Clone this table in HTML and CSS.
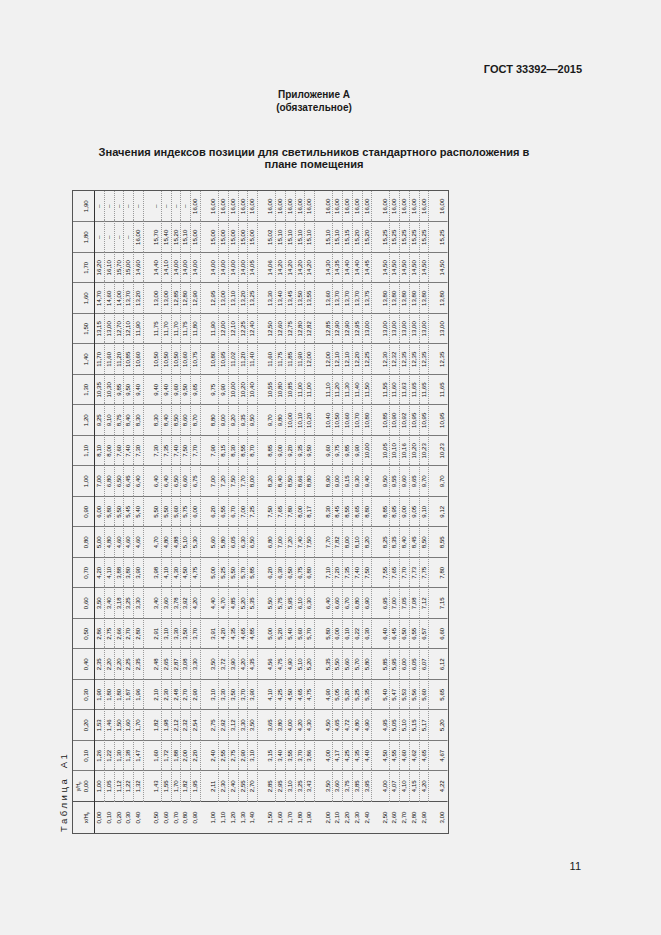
FILE: index.html
```html
<!DOCTYPE html>
<html lang="ru">
<head>
<meta charset="utf-8">
<title>ГОСТ 33392—2015, Приложение А</title>
<link rel="stylesheet" href="styles.css">
</head>
<body>
<div class="page">
  <div class="gost">ГОСТ 33392—2015</div>
  <div class="annex">Приложение А<br>(обязательное)</div>
  <h1 class="title">Значения индексов позиции для светильников стандартного расположения в<br>плане помещения</h1>
  <div class="rot">
    <div class="tblock">
      <div class="cap">Таблица А1</div>
      <div class="tbl">
        <div class="h"><span class="corner">x/H<sub>р</sub></span><span class="first"><em>y/H<sub>р</sub></em>0,00</span><span>0,10</span><span>0,20</span><span>0,30</span><span>0,40</span><span>0,50</span><span>0,60</span><span>0,70</span><span>0,80</span><span>0,90</span><span>1,00</span><span>1,10</span><span>1,20</span><span>1,30</span><span>1,40</span><span>1,50</span><span>1,60</span><span>1,70</span><span>1,80</span><span>1,90</span></div>
        <div class="r"><span>0,00</span><span>1,00</span><span>1,26</span><span>1,53</span><span>1,90</span><span>2,35</span><span>2,86</span><span>3,50</span><span>4,20</span><span>5,00</span><span>6,00</span><span>7,00</span><span>8,10</span><span>9,25</span><span>10,35</span><span>11,70</span><span>13,15</span><span>14,70</span><span>16,20</span><span>–</span><span>–</span></div>
        <div class="r"><span>0,10</span><span>1,05</span><span>1,22</span><span>1,46</span><span>1,80</span><span>2,20</span><span>2,75</span><span>3,40</span><span>4,10</span><span>4,80</span><span>5,80</span><span>6,80</span><span>8,00</span><span>9,10</span><span>10,30</span><span>11,60</span><span>13,00</span><span>14,60</span><span>16,10</span><span>–</span><span>–</span></div>
        <div class="r"><span>0,20</span><span>1,12</span><span>1,30</span><span>1,50</span><span>1,80</span><span>2,20</span><span>2,66</span><span>3,18</span><span>3,88</span><span>4,60</span><span>5,50</span><span>6,50</span><span>7,60</span><span>8,75</span><span>9,85</span><span>11,20</span><span>12,70</span><span>14,00</span><span>15,70</span><span>–</span><span>–</span></div>
        <div class="r"><span>0,30</span><span>1,22</span><span>1,38</span><span>1,60</span><span>1,87</span><span>2,25</span><span>2,70</span><span>3,25</span><span>3,80</span><span>4,60</span><span>5,45</span><span>6,45</span><span>7,40</span><span>8,40</span><span>9,50</span><span>10,85</span><span>12,10</span><span>13,70</span><span>15,00</span><span>–</span><span>–</span></div>
        <div class="r"><span>0,40</span><span>1,32</span><span>1,47</span><span>1,70</span><span>1,96</span><span>2,35</span><span>2,80</span><span>3,30</span><span>3,90</span><span>4,60</span><span>5,40</span><span>6,40</span><span>7,30</span><span>8,30</span><span>9,40</span><span>10,60</span><span>11,90</span><span>13,20</span><span>14,60</span><span>16,00</span><span>–</span></div>
        <div class="r g"><span>0,50</span><span>1,43</span><span>1,60</span><span>1,82</span><span>2,10</span><span>2,48</span><span>2,91</span><span>3,40</span><span>3,98</span><span>4,70</span><span>5,50</span><span>6,40</span><span>7,30</span><span>8,30</span><span>9,40</span><span>10,50</span><span>11,75</span><span>13,00</span><span>14,40</span><span>15,70</span><span>–</span></div>
        <div class="r"><span>0,60</span><span>1,55</span><span>1,72</span><span>1,98</span><span>2,30</span><span>2,65</span><span>3,10</span><span>3,60</span><span>4,10</span><span>4,80</span><span>5,50</span><span>6,40</span><span>7,35</span><span>8,40</span><span>9,40</span><span>10,50</span><span>11,70</span><span>13,00</span><span>14,10</span><span>15,40</span><span>–</span></div>
        <div class="r"><span>0,70</span><span>1,70</span><span>1,88</span><span>2,12</span><span>2,48</span><span>2,87</span><span>3,30</span><span>3,78</span><span>4,30</span><span>4,88</span><span>5,60</span><span>6,50</span><span>7,40</span><span>8,50</span><span>9,60</span><span>10,50</span><span>11,70</span><span>12,85</span><span>14,00</span><span>15,20</span><span>–</span></div>
        <div class="r"><span>0,80</span><span>1,82</span><span>2,00</span><span>2,32</span><span>2,70</span><span>3,08</span><span>3,50</span><span>3,92</span><span>4,50</span><span>5,10</span><span>5,75</span><span>6,60</span><span>7,50</span><span>8,60</span><span>9,50</span><span>10,60</span><span>11,75</span><span>12,80</span><span>14,00</span><span>15,10</span><span>–</span></div>
        <div class="r"><span>0,90</span><span>1,95</span><span>2,20</span><span>2,54</span><span>2,90</span><span>3,30</span><span>3,70</span><span>4,20</span><span>4,75</span><span>5,30</span><span>6,00</span><span>6,75</span><span>7,70</span><span>8,70</span><span>9,65</span><span>10,75</span><span>11,80</span><span>12,90</span><span>14,00</span><span>15,00</span><span>16,00</span></div>
        <div class="r g"><span>1,00</span><span>2,11</span><span>2,40</span><span>2,75</span><span>3,10</span><span>3,50</span><span>3,91</span><span>4,40</span><span>5,00</span><span>5,60</span><span>6,20</span><span>7,00</span><span>7,90</span><span>8,80</span><span>9,75</span><span>10,80</span><span>11,90</span><span>12,95</span><span>14,00</span><span>15,00</span><span>16,00</span></div>
        <div class="r"><span>1,10</span><span>2,30</span><span>2,55</span><span>2,92</span><span>3,30</span><span>3,72</span><span>4,20</span><span>4,70</span><span>5,25</span><span>5,80</span><span>6,55</span><span>7,20</span><span>8,15</span><span>9,00</span><span>9,90</span><span>10,95</span><span>12,00</span><span>13,00</span><span>14,00</span><span>15,00</span><span>16,00</span></div>
        <div class="r"><span>1,20</span><span>2,40</span><span>2,75</span><span>3,12</span><span>3,50</span><span>3,90</span><span>4,35</span><span>4,85</span><span>5,50</span><span>6,05</span><span>6,70</span><span>7,50</span><span>8,30</span><span>9,20</span><span>10,00</span><span>11,02</span><span>12,10</span><span>13,10</span><span>14,00</span><span>15,00</span><span>16,00</span></div>
        <div class="r"><span>1,30</span><span>2,55</span><span>2,90</span><span>3,30</span><span>3,70</span><span>4,20</span><span>4,65</span><span>5,20</span><span>5,70</span><span>6,30</span><span>7,00</span><span>7,70</span><span>8,55</span><span>9,35</span><span>10,20</span><span>11,20</span><span>12,25</span><span>13,20</span><span>14,00</span><span>15,00</span><span>16,00</span></div>
        <div class="r"><span>1,40</span><span>2,70</span><span>3,10</span><span>3,50</span><span>3,90</span><span>4,35</span><span>4,85</span><span>5,35</span><span>5,85</span><span>6,50</span><span>7,25</span><span>8,00</span><span>8,70</span><span>9,50</span><span>10,40</span><span>11,40</span><span>12,40</span><span>13,25</span><span>14,05</span><span>15,00</span><span>16,00</span></div>
        <div class="r g"><span>1,50</span><span>2,85</span><span>3,15</span><span>3,65</span><span>4,10</span><span>4,56</span><span>5,00</span><span>5,50</span><span>6,20</span><span>6,80</span><span>7,50</span><span>8,20</span><span>8,85</span><span>9,70</span><span>10,55</span><span>11,60</span><span>12,50</span><span>13,30</span><span>14,06</span><span>15,02</span><span>16,00</span></div>
        <div class="r"><span>1,60</span><span>2,95</span><span>3,40</span><span>3,80</span><span>4,25</span><span>4,75</span><span>5,20</span><span>5,75</span><span>6,30</span><span>7,00</span><span>7,65</span><span>8,40</span><span>9,00</span><span>9,80</span><span>10,80</span><span>11,75</span><span>12,60</span><span>13,40</span><span>14,20</span><span>15,10</span><span>16,00</span></div>
        <div class="r"><span>1,70</span><span>3,10</span><span>3,55</span><span>4,00</span><span>4,50</span><span>4,90</span><span>5,40</span><span>5,95</span><span>6,50</span><span>7,20</span><span>7,80</span><span>8,50</span><span>9,20</span><span>10,00</span><span>10,85</span><span>11,85</span><span>12,75</span><span>13,45</span><span>14,20</span><span>15,10</span><span>16,00</span></div>
        <div class="r"><span>1,80</span><span>3,25</span><span>3,70</span><span>4,20</span><span>4,65</span><span>5,10</span><span>5,60</span><span>6,10</span><span>6,75</span><span>7,40</span><span>8,00</span><span>8,66</span><span>9,35</span><span>10,10</span><span>11,00</span><span>11,90</span><span>12,80</span><span>13,50</span><span>14,20</span><span>15,10</span><span>16,00</span></div>
        <div class="r"><span>1,90</span><span>3,43</span><span>3,86</span><span>4,30</span><span>4,75</span><span>5,20</span><span>5,70</span><span>6,30</span><span>6,80</span><span>7,50</span><span>8,17</span><span>8,80</span><span>9,50</span><span>10,20</span><span>11,00</span><span>12,00</span><span>12,82</span><span>13,55</span><span>14,20</span><span>15,10</span><span>16,00</span></div>
        <div class="r g"><span>2,00</span><span>3,50</span><span>4,00</span><span>4,50</span><span>4,90</span><span>5,35</span><span>5,80</span><span>6,40</span><span>7,10</span><span>7,70</span><span>8,30</span><span>8,90</span><span>9,60</span><span>10,40</span><span>11,10</span><span>12,00</span><span>12,85</span><span>13,60</span><span>14,30</span><span>15,10</span><span>16,00</span></div>
        <div class="r"><span>2,10</span><span>3,60</span><span>4,17</span><span>4,65</span><span>5,05</span><span>5,50</span><span>6,00</span><span>6,60</span><span>7,20</span><span>7,82</span><span>8,45</span><span>9,00</span><span>9,75</span><span>10,50</span><span>11,20</span><span>12,10</span><span>12,90</span><span>13,70</span><span>14,35</span><span>15,10</span><span>16,00</span></div>
        <div class="r"><span>2,20</span><span>3,75</span><span>4,25</span><span>4,72</span><span>5,20</span><span>5,60</span><span>6,10</span><span>6,70</span><span>7,35</span><span>8,00</span><span>8,55</span><span>9,15</span><span>9,85</span><span>10,60</span><span>11,30</span><span>12,10</span><span>12,90</span><span>13,70</span><span>14,40</span><span>15,15</span><span>16,00</span></div>
        <div class="r"><span>2,30</span><span>3,85</span><span>4,35</span><span>4,80</span><span>5,25</span><span>5,70</span><span>6,22</span><span>6,80</span><span>7,40</span><span>8,10</span><span>8,65</span><span>9,30</span><span>9,90</span><span>10,70</span><span>11,40</span><span>12,20</span><span>12,95</span><span>13,70</span><span>14,40</span><span>15,20</span><span>16,00</span></div>
        <div class="r"><span>2,40</span><span>3,95</span><span>4,40</span><span>4,90</span><span>5,35</span><span>5,80</span><span>6,30</span><span>6,90</span><span>7,50</span><span>8,20</span><span>8,80</span><span>9,40</span><span>10,00</span><span>10,80</span><span>11,50</span><span>12,25</span><span>13,00</span><span>13,75</span><span>14,45</span><span>15,20</span><span>16,00</span></div>
        <div class="r g"><span>2,50</span><span>4,00</span><span>4,50</span><span>4,95</span><span>5,40</span><span>5,85</span><span>6,40</span><span>6,95</span><span>7,55</span><span>8,25</span><span>8,85</span><span>9,50</span><span>10,05</span><span>10,85</span><span>11,55</span><span>12,30</span><span>13,00</span><span>13,80</span><span>14,50</span><span>15,25</span><span>16,00</span></div>
        <div class="r"><span>2,60</span><span>4,07</span><span>4,55</span><span>5,05</span><span>5,47</span><span>5,95</span><span>6,45</span><span>7,00</span><span>7,65</span><span>8,35</span><span>8,95</span><span>9,55</span><span>10,10</span><span>10,90</span><span>11,60</span><span>12,32</span><span>13,00</span><span>13,80</span><span>14,50</span><span>15,25</span><span>16,00</span></div>
        <div class="r"><span>2,70</span><span>4,10</span><span>4,60</span><span>5,10</span><span>5,53</span><span>6,00</span><span>6,50</span><span>7,05</span><span>7,70</span><span>8,40</span><span>9,00</span><span>9,60</span><span>10,16</span><span>10,92</span><span>11,63</span><span>12,35</span><span>13,00</span><span>13,80</span><span>14,50</span><span>15,25</span><span>16,00</span></div>
        <div class="r"><span>2,80</span><span>4,15</span><span>4,62</span><span>5,15</span><span>5,56</span><span>6,05</span><span>6,55</span><span>7,08</span><span>7,73</span><span>8,45</span><span>9,05</span><span>9,65</span><span>10,20</span><span>10,95</span><span>11,65</span><span>12,35</span><span>13,00</span><span>13,80</span><span>14,50</span><span>15,25</span><span>16,00</span></div>
        <div class="r"><span>2,90</span><span>4,20</span><span>4,65</span><span>5,17</span><span>5,60</span><span>6,07</span><span>6,57</span><span>7,12</span><span>7,75</span><span>8,50</span><span>9,10</span><span>9,70</span><span>10,23</span><span>10,95</span><span>11,65</span><span>12,35</span><span>13,00</span><span>13,80</span><span>14,50</span><span>15,25</span><span>16,00</span></div>
        <div class="r g last"><span>3,00</span><span>4,22</span><span>4,67</span><span>5,20</span><span>5,65</span><span>6,12</span><span>6,60</span><span>7,15</span><span>7,80</span><span>8,55</span><span>9,12</span><span>9,70</span><span>10,23</span><span>10,95</span><span>11,65</span><span>12,35</span><span>13,00</span><span>13,80</span><span>14,50</span><span>15,25</span><span>16,00</span></div>
      </div>
    </div>
  </div>
  <div class="pnum">11</div>
</div>
</body>
</html>
```

FILE: styles.css
```css
html, body {
  margin: 0;
  padding: 0;
}
body {
  background: #f1f1f1;
  color: #1a1a1a;
  font-family: "Liberation Sans", Arial, sans-serif;
  overflow: hidden;
}
.page {
  padding: 62px 79px 0 46px;
}
.gost {
  text-align: right;
  font-weight: bold;
  font-size: 11px;
  line-height: 14px;
}
.annex {
  margin-top: 11.5px;
  text-align: center;
  font-weight: bold;
  font-size: 10px;
  line-height: 13px;
}
.title {
  margin: 33.5px 0 0;
  text-align: center;
  font-weight: bold;
  font-size: 11.1px;
  line-height: 11.5px;
}
.rot {
  margin: 20px 0 0 9px;
  width: 393px;
  height: 644px;
}
.tblock {
  width: 644px;
  height: 393px;
  transform-origin: 0 0;
  transform: translateY(644px) rotate(-90deg);
}
.cap {
  height: 17px;
  line-height: 17px;
  font-size: 9.5px;
  letter-spacing: 2.6px;
  word-spacing: 3px;
  padding-left: 2px;
}
.tbl {
  border: 1px solid #555;
  font-size: 6.1px;
  color: #0c0c0c;
}
.h,
.r {
  display: grid;
  grid-template-columns: 32px repeat(20, 1fr);
}
.h {
  height: 22px;
  border-bottom: 1px solid #333;
  box-sizing: border-box;
}
.h > span {
  border-right: 1px solid #7a7a7a;
  text-align: center;
  padding-top: 9px;
  line-height: 7px;
}
.h > span:first-child {
  border-right-color: #555;
}
.h > span:last-child {
  border-right: 0;
}
.h em {
  display: block;
  font-style: normal;
  font-size: 5px;
  line-height: 7px;
}
.h .first {
  padding-top: 2px;
}
.h sub {
  font-size: 4px;
  vertical-align: -1px;
  line-height: 0;
}
.r {
  height: 9.75px;
}
.r > span {
  box-sizing: border-box;
  border-right: 1px solid #7a7a7a;
  border-bottom: 1px dotted #9a9a9a;
  text-align: center;
  line-height: 8.75px;
  white-space: nowrap;
}
.r > span:first-child {
  border-bottom-color: transparent;
  border-right-color: #555;
}
.r > span:last-child {
  border-right: 0;
}
.r.g {
  height: 18.15px;
}
.r.g > span {
  padding-top: 8.4px;
}
.r.last > span {
  border-bottom-color: transparent;
}
.pnum {
  margin-top: 25px;
  text-align: right;
  font-size: 11px;
  line-height: 14px;
  padding-right: 1px;
}
```
